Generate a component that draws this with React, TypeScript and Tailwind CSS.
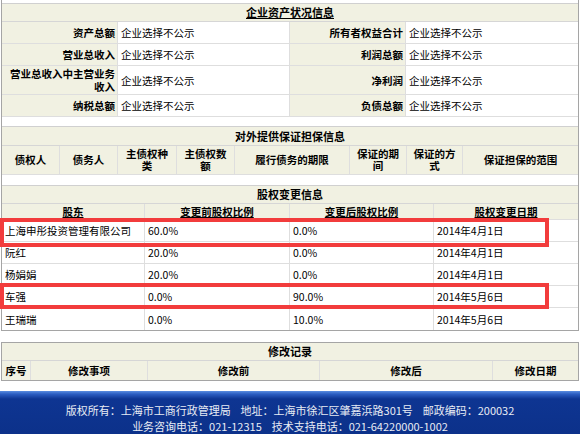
import { type FC, type ReactNode } from 'react'

const NOT_PUBLIC = '企业选择不公示'

const assets: [string, string][] = [
  ['资产总额', '所有者权益合计'],
  ['营业总收入', '利润总额'],
  ['营业总收入中主营业务收入', '净利润'],
  ['纳税总额', '负债总额'],
]

const guaranteeCols = [
  '债权人',
  '债务人',
  '主债权种类',
  '主债权数额',
  '履行债务的期限',
  '保证的期间',
  '保证的方式',
  '保证担保的范围',
]

const equity = [
  { name: '上海申彤投资管理有限公司', before: '60.0%', after: '0.0%', date: '2014年4月1日' },
  { name: '阮红', before: '20.0%', after: '0.0%', date: '2014年4月1日' },
  { name: '杨娟娟', before: '20.0%', after: '0.0%', date: '2014年4月1日' },
  { name: '车强', before: '0.0%', after: '90.0%', date: '2014年5月6日' },
  { name: '王瑞瑞', before: '0.0%', after: '10.0%', date: '2014年5月6日' },
]

const SectionTitle: FC<{ children: ReactNode; underline?: boolean; height?: string }> = ({
  children,
  underline,
  height = 'h-[18px]',
}) => (
  <div
    className={`flex ${height} items-center justify-center border-b border-[#d6d6d6] bg-[#f1f1e2] text-[11px] font-bold ${
      underline ? 'underline' : ''
    }`}
  >
    {children}
  </div>
)

export default function App() {
  return (
    <div className="relative h-[434px] w-[580px] overflow-hidden bg-white font-['SimSun','Noto_Sans_CJK_SC',sans-serif] text-[10.5px] leading-[13px] text-black">
      <div className="mx-[1px] border-x border-b border-[#a5a5a5] pt-[3px]">
        {/* 企业资产状况信息 */}
        <div className="border-t border-[#d0d0d0]">
          <SectionTitle underline>企业资产状况信息</SectionTitle>
          <div className="grid grid-cols-[116px_172px_116px_172px]">
            {assets.map(([a, b], i) => {
              const h = i === 2 ? 'h-[29px]' : 'h-[22px]'
              return (
                <div key={a} className="contents">
                  <div className={`flex ${h} items-center justify-end border-r border-b border-[#dedede] bg-[#f1f1e2] px-[2px] text-right font-bold`}>
                    {a}
                  </div>
                  <div className={`flex ${h} items-center border-r border-b border-[#dedede] pl-[3px]`}>{NOT_PUBLIC}</div>
                  <div className={`flex ${h} items-center justify-end border-r border-b border-[#dedede] bg-[#f1f1e2] px-[2px] text-right font-bold`}>
                    {b}
                  </div>
                  <div className={`flex ${h} items-center border-b border-[#dedede] pl-[3px]`}>{NOT_PUBLIC}</div>
                </div>
              )
            })}
          </div>
        </div>

        <div className="h-[9px]" />

        {/* 对外提供保证担保信息 */}
        <div className="border-t border-[#d0d0d0]">
          <SectionTitle height="h-[19px]">对外提供保证担保信息</SectionTitle>
          <div className="grid grid-cols-[58px_58px_59px_58px_115px_57px_56px_115px] bg-[#f1f1e2]">
            {guaranteeCols.map((c, i) => (
              <div
                key={c}
                className={`flex h-[29px] items-center justify-center border-b border-[#dedede] px-[6px] text-center font-bold leading-[12px] ${
                  i < guaranteeCols.length - 1 ? 'border-r' : ''
                }`}
              >
                {c}
              </div>
            ))}
          </div>
        </div>

        <div className="h-[10px]" />

        {/* 股权变更信息 */}
        <div className="border-t border-[#d0d0d0]">
          <SectionTitle>股权变更信息</SectionTitle>
          <div className="grid grid-cols-[143px_145px_144px_144px]">
            {['股东', '变更前股权比例', '变更后股权比例', '股权变更日期'].map((c, i) => (
              <div
                key={c}
                className={`flex h-[16px] items-center justify-center border-b border-[#dedede] bg-[#f1f1e2] font-bold underline ${
                  i < 3 ? 'border-r' : ''
                }`}
              >
                {c}
              </div>
            ))}
            {equity.map((r, idx) => (
              <div key={r.name} className="contents">
                {[r.name, r.before, r.after, r.date].map((v, i) => (
                  <div
                    key={i}
                    className={`flex h-[22px] items-center pl-[3px] ${idx < equity.length - 1 ? 'border-b' : ''} border-[#dedede] ${
                      i < 3 ? 'border-r' : ''
                    }`}
                  >
                    {v}
                  </div>
                ))}
              </div>
            ))}
          </div>
        </div>
      </div>

      <div className="h-[11px]" />

      {/* 修改记录 */}
      <div className="mx-[1px] border border-[#a5a5a5]">
        <SectionTitle>修改记录</SectionTitle>
        <div className="grid grid-cols-[29px_117px_172px_173px_85px] bg-[#f1f1e2]">
          {['序号', '修改事项', '修改前', '修改后', '修改日期'].map((c, i) => (
            <div
              key={c}
              className={`flex h-[19px] items-center justify-center font-bold ${i < 4 ? 'border-r border-[#dedede]' : ''}`}
            >
              {c}
            </div>
          ))}
        </div>
      </div>

      <div className="h-[10px]" />

      <footer className="h-[60px] bg-[linear-gradient(to_bottom,#5a8de0_0px,#2c5ec2_3px,#0e3592_8px,#0b2f86_100%)] pt-[11px] text-center font-['Noto_Sans_CJK_SC',sans-serif] text-[11px] leading-[16px] text-[#e8ecf4]">
        <p>
          版权所有：上海市工商行政管理局&nbsp;&nbsp;&nbsp;&nbsp;地址：上海市徐汇区肇嘉浜路301号&nbsp;&nbsp;&nbsp;&nbsp;邮政编码：200032
        </p>
        <p>业务咨询电话：021-12315&nbsp;&nbsp;&nbsp;&nbsp;技术支持电话：021-64220000-1002</p>
      </footer>

      {/* highlight annotations */}
      <div className="absolute left-0 top-[218px] h-[29px] w-[549px] border-[4px] border-[#f23c3c]" />
      <div className="absolute left-0 top-[283px] h-[26px] w-[549px] border-[4px] border-[#f23c3c]" />
    </div>
  )
}
